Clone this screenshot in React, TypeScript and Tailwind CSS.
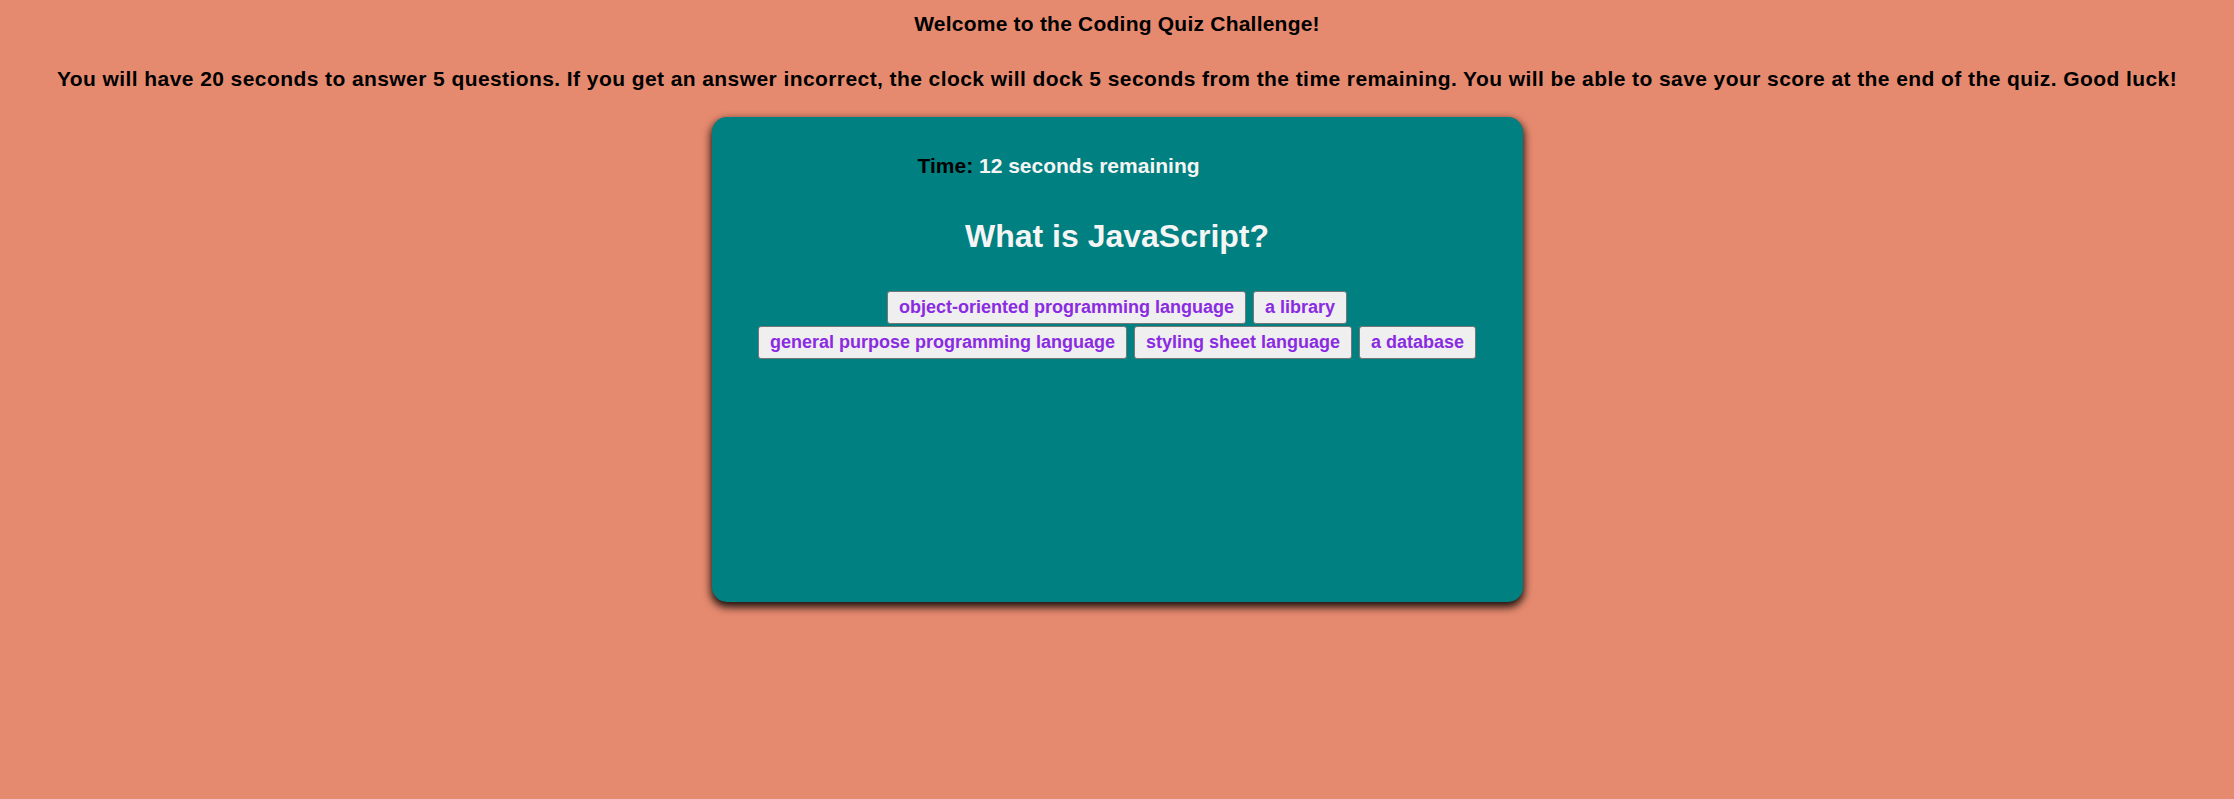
import React from "react";

const answers = [
    "object-oriented programming language",
    "a library",
    "general purpose programming language",
    "styling sheet language",
    "a database",
];

function AnswerButton({ label }: { label: string }) {
    return (
        <button className="rounded-[3px] border border-[#767676] bg-[#efefef] px-[11px] py-[5px] text-[18px] leading-[21px] font-bold text-[#8a2be2]">
            {label}
        </button>
    );
}

export default function App() {
    return (
        <div className="min-h-screen bg-[#e68a6f] text-center font-['Liberation_Sans',Arial,sans-serif] font-bold text-black">
            {/* Intro */}
            <h3 className="pt-[12px] text-[21px] leading-[24px] tracking-[0.22px]">
                Welcome to the Coding Quiz Challenge!
            </h3>
            <p className="mt-[31px] text-[21px] leading-[24px] tracking-[0.42px]">
                You will have 20 seconds to answer 5 questions. If you get an answer incorrect, the clock will dock 5 seconds from the time remaining. You will be able to save your score at the end of the quiz. Good luck!
            </p>

            {/* Quiz card */}
            <div className="mx-auto mt-[26px] h-[485px] w-[811px] rounded-[15px] bg-[#008080] pt-[37px] shadow-[0_4px_8px_1px_rgba(0,0,0,0.9)]">
                <div className="pl-[206px] text-left text-[21px] leading-[24px]">
                    Time: <span className="text-[#f5f5f5]">12 seconds remaining</span>
                </div>

                <h2 className="mt-[40px] text-[32px] leading-[37px] text-[#f5f5f5]">
                    What is JavaScript?
                </h2>

                <div className="mx-auto mt-[36px] flex max-w-[760px] flex-wrap justify-center gap-x-[7px] gap-y-[2px]">
                    {answers.map((a) => (
                        <AnswerButton key={a} label={a} />
                    ))}
                </div>
            </div>
        </div>
    );
}
